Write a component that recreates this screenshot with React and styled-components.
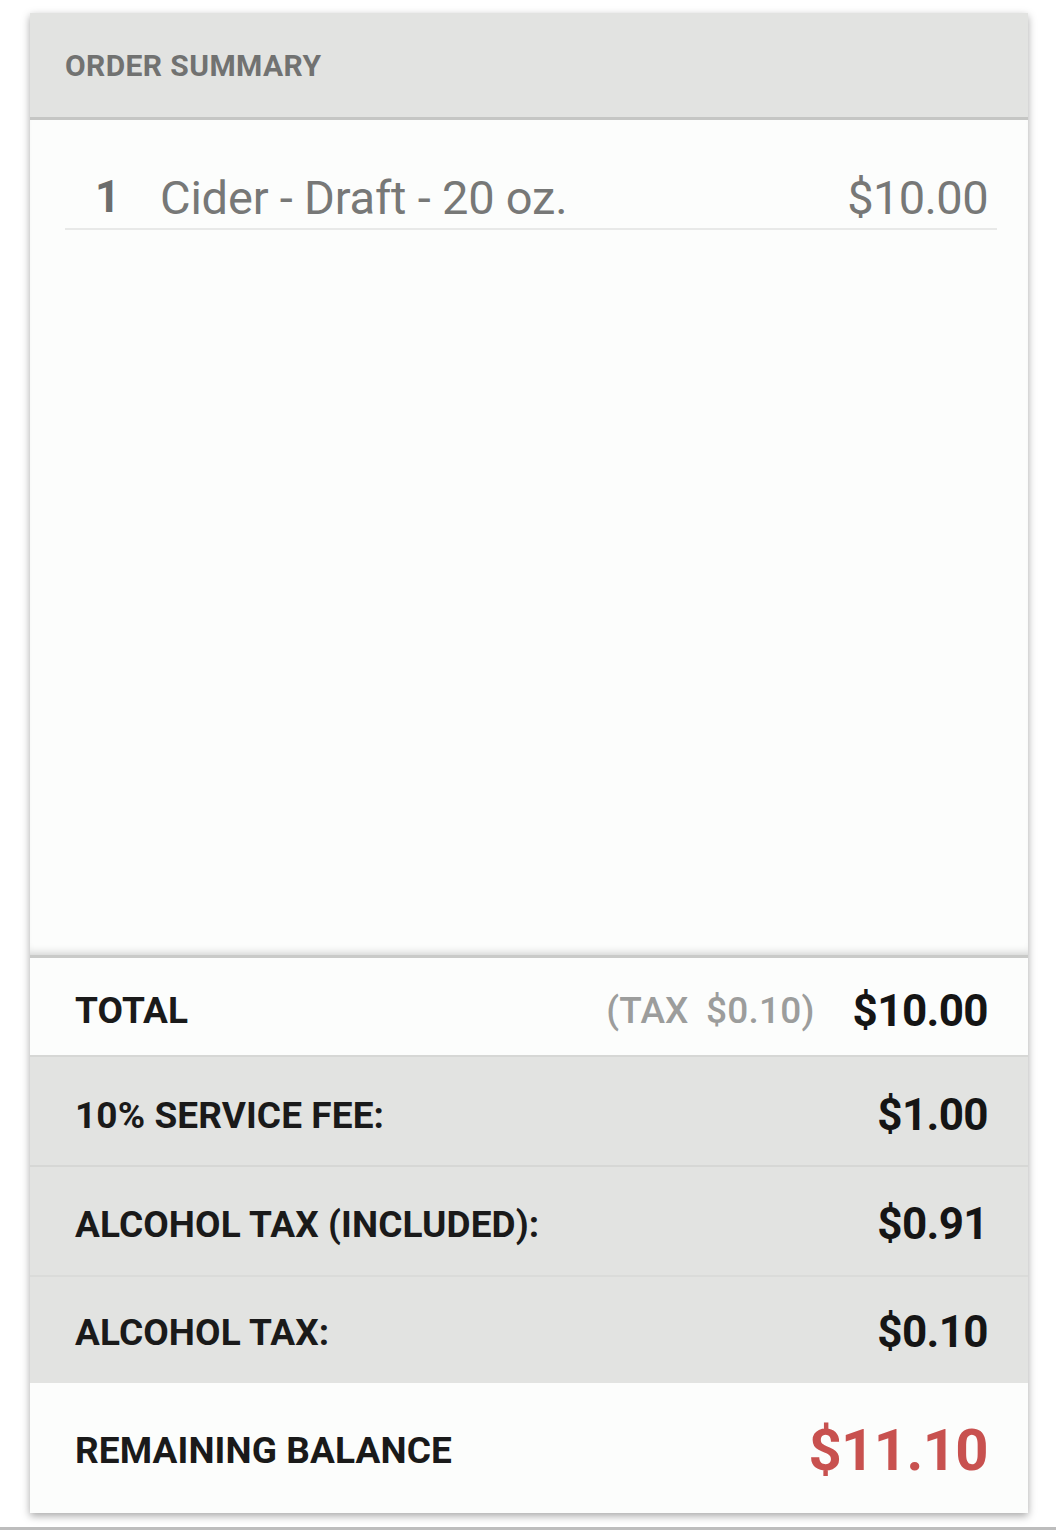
import React from 'react';
import styled, { createGlobalStyle } from 'styled-components';

const GlobalStyle = createGlobalStyle`
  html, body {
    margin: 0;
    padding: 0;
    background: #ffffff;
    font-family: Roboto, 'Liberation Sans', sans-serif;
  }
`;

const Page = styled.div`
  box-sizing: border-box;
  height: 1530px;
  padding: 13px 28px 0 30px;
  border-bottom: 3px solid #bdbdbd;
  overflow: hidden;
`;

const Card = styled.div`
  width: 998px;
  height: 1500px;
  display: flex;
  flex-direction: column;
  background: #fcfdfc;
  box-shadow: 0 3px 8px rgba(0, 0, 0, 0.35);
`;

const Header = styled.div`
  height: 104px;
  display: flex;
  align-items: center;
  padding-left: 35px;
  background: #e2e3e1;
  border-bottom: 3px solid #c5c6c4;
  font-size: 30px;
  font-weight: 700;
  color: #717271;
  letter-spacing: 0.4px;
`;

const Items = styled.div`
  flex: 1;
  padding: 0 31px 0 35px;
  box-shadow: inset 0 -8px 8px -6px rgba(0, 0, 0, 0.18);
  border-bottom: 3px solid #c9cac8;
`;

const ItemRow = styled.div`
  height: 110px;
  display: flex;
  align-items: center;
  padding-top: 46px;
  box-sizing: border-box;
  border-bottom: 2px solid #e8e9e8;
  color: #777877;
`;

const Qty = styled.span`
  width: 65px;
  padding-left: 30px;
  font-size: 44px;
  font-weight: 700;
  color: #6c6d6c;
`;

const ItemName = styled.span`
  flex: 1;
  font-size: 47px;
  letter-spacing: -0.2px;
`;

const ItemPrice = styled.span`
  font-size: 47px;
  letter-spacing: -0.6px;
  padding-right: 9px;
`;

const SummaryRow = styled.div`
  height: ${p => p.$h}px;
  box-sizing: border-box;
  display: flex;
  align-items: center;
  padding: ${p => p.$top || 4}px 40px 0 45px;
  background: ${p => (p.$shade ? '#e2e3e1' : '#fcfdfc')};
  border-bottom: ${p => (p.$last ? 'none' : `2px solid ${p.$line || '#d6d7d5'}`)};
  color: #1a1a1a;
`;

const Label = styled.span`
  flex: 1;
  font-size: 37px;
  font-weight: 700;
  letter-spacing: 0.1px;
`;

const TaxNote = styled.span`
  font-size: 37px;
  font-weight: 500;
  color: #9c9d9c;
  margin-right: 38px;
  word-spacing: 8px;
  letter-spacing: 0.2px;
`;

const Amount = styled.span`
  font-size: ${p => p.$size || 44}px;
  font-weight: 700;
  color: ${p => p.$color || '#151515'};
  letter-spacing: ${p => (p.$size ? -0.6 : -0.6)}px;
`;

export default function App() {
  return (
    <>
      <GlobalStyle />
      <Page>
        <Card>
          <Header>ORDER SUMMARY</Header>
          <Items>
            <ItemRow>
              <Qty>1</Qty>
              <ItemName>Cider - Draft - 20 oz.</ItemName>
              <ItemPrice>$10.00</ItemPrice>
            </ItemRow>
          </Items>
          <SummaryRow $h={99} $top={8}>
            <Label>TOTAL</Label>
            <TaxNote>(TAX $0.10)</TaxNote>
            <Amount>$10.00</Amount>
          </SummaryRow>
          <SummaryRow $h={110} $shade $top={8}>
            <Label>10% SERVICE FEE:</Label>
            <Amount>$1.00</Amount>
          </SummaryRow>
          <SummaryRow $h={110} $shade $line="#dadbd9" $top={6}>
            <Label>ALCOHOL TAX (INCLUDED):</Label>
            <Amount>$0.91</Amount>
          </SummaryRow>
          <SummaryRow $h={106} $shade $last $top={4}>
            <Label>ALCOHOL TAX:</Label>
            <Amount>$0.10</Amount>
          </SummaryRow>
          <SummaryRow $h={130} $last $top={4}>
            <Label>REMAINING BALANCE</Label>
            <Amount $size={58} $color="#c8514f">$11.10</Amount>
          </SummaryRow>
        </Card>
      </Page>
    </>
  );
}
